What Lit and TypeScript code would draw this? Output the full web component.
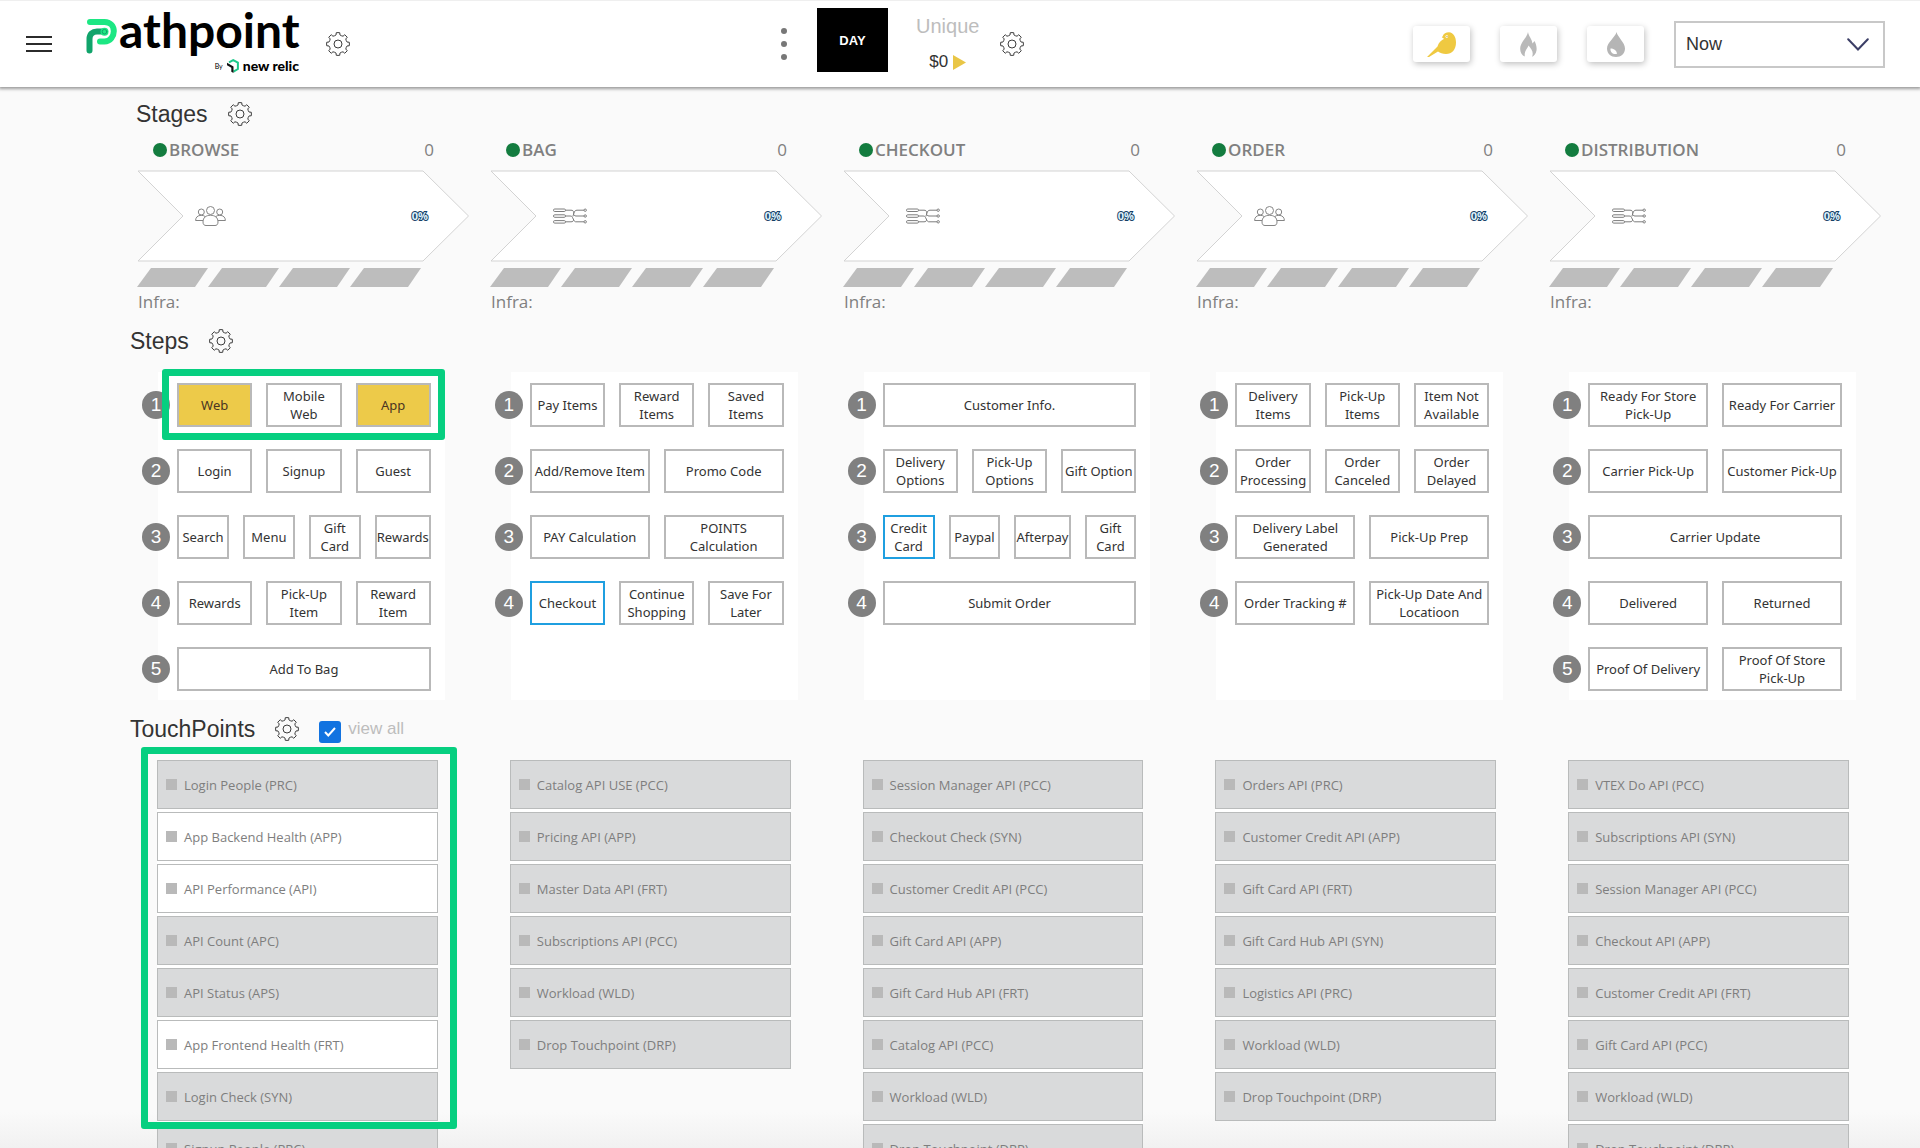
import { LitElement, html, css } from "lit";
import { customElement, property, state } from "lit/decorators.js";
import { classMap } from "lit/directives/class-map.js";

type Mark = "warn" | "active" | "";
interface Step { label: string; mark?: Mark }
interface TouchPoint { label: string; on?: boolean }
interface Stage {
  title: string;
  icon: "people" | "flow";
  steps: Step[][];
  touchpoints: TouchPoint[];
  highlight?: boolean;
}

const row = (...labels: string[]): Step[] =>
  labels.map((l) =>
    l.startsWith("!") ? { label: l.slice(1), mark: "warn" as Mark }
    : l.startsWith("*") ? { label: l.slice(1), mark: "active" as Mark }
    : { label: l });
const points = (...labels: string[]): TouchPoint[] =>
  labels.map((l) => (l.startsWith("+") ? { label: l.slice(1), on: true } : { label: l }));

const STAGES: Stage[] = [
  {
    title: "BROWSE", icon: "people", highlight: true,
    steps: [
      row("!Web", "Mobile\nWeb", "!App"),
      row("Login", "Signup", "Guest"),
      row("Search", "Menu", "Gift\nCard", "Rewards"),
      row("Rewards", "Pick-Up\nItem", "Reward\nItem"),
      row("Add To Bag"),
    ],
    touchpoints: points("Login People (PRC)", "+App Backend Health (APP)", "+API Performance (API)",
      "API Count (APC)", "API Status (APS)", "+App Frontend Health (FRT)", "Login Check (SYN)", "Signup People (PRC)"),
  },
  {
    title: "BAG", icon: "flow",
    steps: [
      row("Pay Items", "Reward\nItems", "Saved\nItems"),
      row("Add/Remove Item", "Promo Code"),
      row("PAY Calculation", "POINTS\nCalculation"),
      row("*Checkout", "Continue\nShopping", "Save For\nLater"),
    ],
    touchpoints: points("Catalog API USE (PCC)", "Pricing API (APP)", "Master Data API (FRT)",
      "Subscriptions API (PCC)", "Workload (WLD)", "Drop Touchpoint (DRP)"),
  },
  {
    title: "CHECKOUT", icon: "flow",
    steps: [
      row("Customer Info."),
      row("Delivery\nOptions", "Pick-Up\nOptions", "Gift Option"),
      row("*Credit\nCard", "Paypal", "Afterpay", "Gift\nCard"),
      row("Submit Order"),
    ],
    touchpoints: points("Session Manager API (PCC)", "Checkout Check (SYN)", "Customer Credit API (PCC)",
      "Gift Card API (APP)", "Gift Card Hub API (FRT)", "Catalog API (PCC)", "Workload (WLD)", "Drop Touchpoint (DRP)"),
  },
  {
    title: "ORDER", icon: "people",
    steps: [
      row("Delivery\nItems", "Pick-Up\nItems", "Item Not\nAvailable"),
      row("Order\nProcessing", "Order\nCanceled", "Order\nDelayed"),
      row("Delivery Label\nGenerated", "Pick-Up Prep"),
      row("Order Tracking #", "Pick-Up Date And\nLocatioon"),
    ],
    touchpoints: points("Orders API (PRC)", "Customer Credit API (APP)", "Gift Card API (FRT)",
      "Gift Card Hub API (SYN)", "Logistics API (PRC)", "Workload (WLD)", "Drop Touchpoint (DRP)"),
  },
  {
    title: "DISTRIBUTION", icon: "flow",
    steps: [
      row("Ready For Store\nPick-Up", "Ready For Carrier"),
      row("Carrier Pick-Up", "Customer Pick-Up"),
      row("Carrier Update"),
      row("Delivered", "Returned"),
      row("Proof Of Delivery", "Proof Of Store\nPick-Up"),
    ],
    touchpoints: points("VTEX Do API (PCC)", "Subscriptions API (SYN)", "Session Manager API (PCC)",
      "Checkout API (APP)", "Customer Credit API (FRT)", "Gift Card API (PCC)", "Workload (WLD)", "Drop Touchpoint (DRP)"),
  },
];

/* Eight-toothed cog outline on a 24 unit canvas. */
const gearPath = (() => {
  const at = (r: number, deg: number) => {
    const a = (deg * Math.PI) / 180;
    return `${(12 + r * Math.sin(a)).toFixed(2)} ${(12 - r * Math.cos(a)).toFixed(2)}`;
  };
  let d = "";
  for (let i = 0; i < 8; i++) {
    const c = i * 45;
    d += `${i ? "L" : "M"}${at(9.3, c - 12)}L${at(11.4, c - 9)}A11.4 11.4 0 0 1 ${at(11.4, c + 9)}L${at(9.3, c + 12)}`;
    d += `Q${at(8.7, c + 22)} ${at(9.3, c + 33)}`;
  }
  return d + "Z";
})();

const gearIcon = html`<svg viewBox="0 0 24 24" width="24" height="24" fill="none" stroke="#3c3c3c" stroke-width="1" stroke-linejoin="round" aria-hidden="true">
  <path d=${gearPath}></path><circle cx="12" cy="12" r="4"></circle></svg>`;

const peopleIcon = html`<svg viewBox="0 0 31 20" width="31" height="20" fill="none" stroke="#858585" stroke-width="1" aria-hidden="true">
  <circle cx="15.5" cy="4.5" r="4"></circle>
  <path d="M8 16C8 11.500 11 9.300 15.500 9.300S23 11.500 23 16C23 18.800 21.500 19.500 20 19.500H11C9.500 19.500 8 18.800 8 16Z"></path>
  <circle cx="6.300" cy="6" r="3"></circle><circle cx="24.700" cy="6" r="3"></circle>
  <path d="M8.300 14.500H.6C.6 11.500 2.500 9.300 6.300 9.300 8 9.300 9.300 9.800 10.200 10.600M22.700 14.500H30.400C30.400 11.500 28.500 9.300 24.700 9.300 23 9.300 21.700 9.800 20.800 10.600"></path></svg>`;

const flowIcon = html`<svg viewBox="0 0 34 16" width="34" height="16" fill="none" stroke="#7c7c7c" stroke-width="1" aria-hidden="true">
  <rect x=".5" y="1" width="12" height="2.500" rx="1.200"></rect>
  <rect x=".5" y="6.800" width="12" height="2.500" rx="1.200"></rect>
  <rect x=".5" y="12.600" width="12" height="2.500" rx="1.200"></rect>
  <path d="M12.500 2.200H18C20 2.200 20.500 3 20.500 4.500V5.500C20.500 7 21.500 8 23 8H31M12.500 8H17C18.500 8 19 8.500 19.500 9.500L21 12.500C21.500 13.500 22 13.800 23 13.800H31M12.500 13.800H18C20 13.800 20.500 13 20.500 11.500M31 2.200H24C22 2.200 21.500 3.500 21 5L19.800 8.500"></path>
  <circle cx="32.200" cy="2.200" r="1.200"></circle><circle cx="32.200" cy="8" r="1.200"></circle><circle cx="32.200" cy="13.800" r="1.200"></circle></svg>`;

@customElement("gear-button")
class GearButton extends LitElement {
  @property() label = "";
  static styles = css`
    :host { display: block; height: 24px; }
    .gear { display: block; width: 24px; height: 24px; padding: 0; border: 0; background: none; cursor: pointer; }
    svg { display: block; }
  `;
  render() {
    return html`<button class="gear" type="button" aria-label=${this.label}>${gearIcon}</button>`;
  }
}

@customElement("top-bar")
class TopBar extends LitElement {
  static styles = css`
    :host {
      display: flex; box-sizing: border-box; height: 87px; padding: 0 35px 0 26px; align-items: center;
      background: #fff; border-top: 1px solid #efefef; box-shadow: 0 1px 3px 1px rgba(0, 0, 0, .38);
      font-family: "Liberation Sans", Arial, sans-serif; position: relative; z-index: 1;
    }
    button { font: inherit; padding: 0; border: 0; background: none; cursor: pointer; }
    svg { display: block; }
    .left { flex: 755 1 0; display: flex; align-items: center; }
    .rest { flex: 1104 1 0; display: flex; align-items: center; justify-content: space-between; }
    .menu { display: grid; gap: 5px; width: 26px; }
    .menu span { height: 2px; background: #2b2b2b; }
    .brand { margin: 0 27px 8px 34px; width: 213px; color: #000; font-family: Lato, "Open Sans", sans-serif; text-decoration: none; }
    .name { display: flex; align-items: flex-start; height: 52px; font-size: 48px; line-height: 48px; font-weight: 700; gap: 1px; }
    .name svg { margin-top: 12px; flex: none; }
    .by { display: flex; justify-content: flex-end; align-items: center; height: 17px; font-size: 14px; line-height: 16px; font-weight: 900; gap: 4px; }
    .by small { font-size: 7px; font-weight: 400; }
    .middle { display: flex; align-items: center; }
    .dots { display: grid; gap: 7px; }
    .dots span { width: 6px; height: 6px; border-radius: 50%; background: #777; }
    .day { margin: 0 0 8px 30px; width: 71px; height: 64px; background: #000; color: #fff; font-size: 13px; font-weight: 700; }
    .unique { margin: 0 21px 0 28px; display: grid; justify-items: center; gap: 14px; }
    .unique .cap { font-size: 20px; line-height: 22px; color: #bdbdbd; }
    .money { display: flex; align-items: center; gap: 5px; font-size: 17px; line-height: 22px; color: #333; }
    .right { display: flex; align-items: center; gap: 30px; }
    .card { display: grid; place-items: center; width: 57px; height: 36px; border-radius: 3px; background: #fff; box-shadow: 1px 2px 6px rgba(0, 0, 0, .25); }
    .pick { display: grid; align-items: center; }
    select {
      appearance: none; grid-area: 1 / 1; width: 211px; height: 47px; padding: 0 10px; font: 18px "Liberation Sans", Arial, sans-serif;
      color: #333; background: #fff; border: 2px solid #c8c8c8; border-radius: 0;
    }
    .pick svg { grid-area: 1 / 1; justify-self: end; margin-right: 16px; pointer-events: none; }
  `;
  render() {
    return html`
      <div class="left">
        <button class="menu" type="button" aria-label="Menu"><span></span><span></span><span></span></button>
        <a class="brand" href="#">
          <span class="name">
            <svg width="32" height="36" viewBox="0 0 32 36" fill="none" stroke-linecap="round" stroke-linejoin="round" aria-hidden="true">
              <path d="M4 4H18.500C24.500 4 27.800 8.500 27.800 13.300S24.500 23.500 18.500 23.500H14" stroke="#1ce783" stroke-width="6"></path>
              <path d="M3.500 32.500V21C3.500 16 6.500 13.500 11 13.500H18" stroke="#11a46b" stroke-width="6"></path>
              <circle cx="18.500" cy="13.700" r="4" fill="#1ce783"></circle><circle cx="18.500" cy="13.700" r="2.300" fill="#1ce783" stroke="#11a46b"></circle>
            </svg>athpoint
          </span>
          <span class="by"><small>By</small>
            <svg width="12" height="14" viewBox="0 0 12 14" fill="none" aria-hidden="true">
              <path d="M2 3.300L6.200 1.100 10.900 3.700V10L6.500 12.600" stroke="#1dc98a" stroke-width="2"></path>
              <path d="M0 3.800L6.500 7.400V14L4.300 12.700V8.700L0 6.200Z" fill="#111"></path>
            </svg>new relic</span>
        </a>
        <gear-button label="General settings"></gear-button>
      </div>
      <div class="rest">
        <div class="middle">
          <button class="dots" type="button" aria-label="More"><span></span><span></span><span></span></button>
          <button class="day" type="button">DAY</button>
          <div class="unique">
            <span class="cap">Unique</span>
            <span class="money">$0<svg width="13" height="15" viewBox="0 0 13 15" aria-hidden="true"><path d="M0 0L13 7.500 0 15Z" fill="#e9c646"></path></svg></span>
          </div>
          <gear-button label="Value settings"></gear-button>
        </div>
        <div class="right">
          <button class="card" type="button" aria-label="Canary">
            <svg width="29" height="25" viewBox="0 0 29 25" aria-hidden="true">
              <path d="M15.500 4.500C16.500 1.500 19 .3 22 .3 26.500 .8 29 5 29 10.500 29 17.500 25 22 19 22 15.500 22 13 21 11 19.500L2 25H0L10.500 14.500C12 10 14.500 8.500 17 6.800L14.800 5.300Z" fill="#efc941"></path>
              <circle cx="19.800" cy="4.600" r="1.300" fill="#fff"></circle><circle cx="20" cy="4.600" r=".6" fill="#a58620"></circle>
            </svg>
          </button>
          <button class="card" type="button" aria-label="Flame">
            <svg width="17" height="25" viewBox="0 0 17 25" aria-hidden="true">
              <path d="M8 0C8.500 4 12 7 12.500 11.500L14.500 9C16 12 17 15 16.500 18.500 16 21.500 14 24 12 24.800 14 20.500 11.500 17 8.500 13.500 8 16 4 18.500 4.800 24.500 2 23.500 0 20.500 .2 16.500 .5 10 7 6 8 0Z" fill="#b9b9b9"></path>
            </svg>
          </button>
          <button class="card" type="button" aria-label="Drop">
            <svg width="18" height="25" viewBox="0 0 18 25" aria-hidden="true">
              <path d="M9.500 0C10.500 5 18 10.500 18 16.500 18 21.500 14 25 9 25S0 21.500 0 16.500C0 10.500 8.500 5 9.500 0Z" fill="#b5b5b5"></path>
              <path d="M3.500 16.500C6.500 16.500 9.500 18 10 21.800 6.500 23 3 20.500 3.500 16.500Z" fill="#fff"></path>
            </svg>
          </button>
          <div class="pick">
            <select aria-label="Time range"><option>Now</option></select>
            <svg width="22" height="13" viewBox="0 0 22 13" fill="none" stroke="#3b3e66" stroke-width="2" stroke-linecap="round" aria-hidden="true"><path d="M1.200 1.200L11 11.500 20.800 1.200"></path></svg>
          </div>
        </div>
      </div>`;
  }
}

@customElement("stage-card")
class StageCard extends LitElement {
  @property({ attribute: false }) stage!: Stage;
  static styles = css`
    :host { display: block; font-family: "Open Sans", "Noto Sans", sans-serif; color: #808080; }
    .title { display: flex; align-items: center; height: 24px; margin: 0 56px 8px 16px; font-size: 17px; line-height: 24px; }
    h3 { margin: 0 auto 0 2px; font-size: inherit; font-weight: 600; }
    .dot { width: 14px; height: 14px; border-radius: 50%; background: #137c3f; }
    .arrow { display: grid; height: 92px; margin-right: 21px; }
    .shape { grid-area: 1 / 1; display: block; width: 100%; height: 92px; }
    .inside { grid-area: 1 / 1; display: flex; align-items: center; justify-content: space-between; padding: 0 41px 0 58px; }
    .inside svg { display: block; }
    .flow { padding-left: 63px; }
    .pct { font: 700 11px/16px "Open Sans", sans-serif; color: #dff1fb; -webkit-text-stroke: 2px #154066; paint-order: stroke fill; }
    .bars { display: grid; grid-template-columns: repeat(4, 1fr); margin: 6px 69px 3px 0; }
    .bar { height: 19px; background: #bdbdbd; clip-path: polygon(14px 0, 100% 0, calc(100% - 13px) 100%, 0 100%); }
    .infra { margin: 0 0 0 1px; font-size: 17px; line-height: 24px; }
  `;
  render() {
    const s = this.stage;
    return html`
      <div class="title"><span class="dot"></span><h3>${s.title}</h3><span>0</span></div>
      <div class="arrow">
        <svg class="shape" viewBox="0 0 332 92" preserveAspectRatio="none" aria-hidden="true">
          <path d="M1 1H286L331.500 46 286 91H1L46 46Z" fill="#fff" stroke="#d3d3d3"></path>
        </svg>
        <div class=${classMap({ inside: true, flow: s.icon === "flow" })}>
          ${s.icon === "people" ? peopleIcon : flowIcon}<span class="pct">0%</span>
        </div>
      </div>
      <div class="bars">${[0, 1, 2, 3].map(() => html`<span class="bar"></span>`)}</div>
      <p class="infra">Infra:</p>`;
  }
}

@customElement("step-panel")
class StepPanel extends LitElement {
  @property({ attribute: false }) stage!: Stage;
  static styles = css`
    :host { display: block; box-sizing: border-box; position: relative; margin: 0 46px 0 20px; padding: 11px 14px 9px 0; background: #fff; }
    .steps { display: grid; gap: 22px; margin: 0 0 0 -16px; padding: 0; list-style: none; }
    .step { display: flex; align-items: center; gap: 7px; }
    .num { flex: none; width: 28px; height: 28px; border-radius: 50%; background: #808080; color: #fff; text-align: center; font: 19px/28px "Liberation Sans", Arial, sans-serif; }
    .boxes { flex: 1; display: flex; gap: 14px; }
    .box {
      flex: 1 1 0; height: 44px; padding: 0; border: 2px solid #b9b9b9; background: #fff; color: #333;
      font: 13px/18px "Noto Sans", "Open Sans", sans-serif; white-space: pre; text-align: center; cursor: pointer;
    }
    .warn { background: #edca49; color: #4a3522; }
    .active { border-color: #1f9fe0; }
    .ring { position: absolute; inset: -3px 0 auto 4px; height: 71px; box-sizing: border-box; border: 7px solid #06cf80; border-radius: 3px; pointer-events: none; }
  `;
  render() {
    return html`
      <ol class="steps">
        ${this.stage.steps.map((r, i) => html`
          <li class="step"><span class="num">${i + 1}</span>
            <div class="boxes">${r.map((b) => html`
              <button type="button" class=${classMap({ box: true, warn: b.mark === "warn", active: b.mark === "active" })}>${b.label}</button>`)}
            </div></li>`)}
      </ol>
      ${this.stage.highlight ? html`<div class="ring"></div>` : ""}`;
  }
}

@customElement("touchpoint-list")
class TouchpointList extends LitElement {
  @property({ attribute: false }) stage!: Stage;
  static styles = css`
    :host { display: block; position: relative; margin: 0 53px 0 19px; }
    .list { display: grid; gap: 3px; margin: 0; padding: 0; list-style: none; background: #fff; }
    .item {
      display: flex; align-items: center; gap: 7px; box-sizing: border-box; height: 49px; padding: 0 8px;
      border: 1px solid #b9bbbb; background: #d9dadb; color: #7e7e7e; font: 13px/18px "Open Sans", "Noto Sans", sans-serif;
    }
    .on { background: #fff; }
    .mark { width: 11px; height: 11px; background: #b9b9b9; }
    .ring { position: absolute; inset: -13px -19px auto -16px; height: 382px; box-sizing: border-box; border: 7px solid #06cf80; border-radius: 3px; pointer-events: none; }
  `;
  render() {
    return html`
      <ul class="list">
        ${this.stage.touchpoints.map((t) => html`
          <li class=${classMap({ item: true, on: !!t.on })}><span class="mark"></span><span>${t.label}</span></li>`)}
      </ul>
      ${this.stage.highlight ? html`<div class="ring"></div>` : ""}`;
  }
}

@customElement("app-root")
class AppRoot extends LitElement {
  @state() private all = true;
  static styles = css`
    :host {
      display: flex; flex-direction: column; height: 100vh; overflow: hidden;
      background: linear-gradient(to top, #f1f1f1, #fafafa 36px); font-family: "Liberation Sans", Arial, sans-serif;
    }
    top-bar { flex: none; }
    .board { flex: 1; min-height: 0; overflow: auto; scrollbar-width: none; padding: 15px 18px 0 130px; }
    .head { display: flex; align-items: center; height: 24px; color: #333; }
    .head h2 { margin: 0 20px 0 0; font-size: 23px; line-height: 24px; font-weight: 400; }
    .stages-head { padding-left: 6px; }
    .cols { display: grid; grid-template-columns: repeat(5, minmax(0, 1fr)); padding-left: 8px; }
    .stages { margin: 12px 0 15px; padding-left: 7px; }
    .steps { margin: 19px 0 17px; }
    .touch { margin: 19px 0 0; }
    .all { display: flex; align-items: center; gap: 7px; margin-left: 20px; font-size: 17px; line-height: 24px; color: #bdbdbd; }
    .all input { appearance: none; width: 22px; height: 22px; margin: 0; border-radius: 3px; background: #fff; border: 1px solid #888; }
    .all input:checked { border: 0; background: #1273e0; }
    .tick { display: grid; margin-top: 6px; }
    .tick > * { grid-area: 1 / 1; }
    .tick svg { place-self: center; pointer-events: none; }
  `;
  render() {
    return html`
      <top-bar></top-bar>
      <main class="board">
        <div class="head stages-head"><h2>Stages</h2><gear-button label="Stages settings"></gear-button></div>
        <div class="cols stages">${STAGES.map((s) => html`<stage-card .stage=${s}></stage-card>`)}</div>
        <div class="head"><h2>Steps</h2><gear-button label="Steps settings"></gear-button></div>
        <div class="cols steps">${STAGES.map((s) => html`<step-panel .stage=${s}></step-panel>`)}</div>
        <div class="head"><h2>TouchPoints</h2><gear-button label="TouchPoints settings"></gear-button>
          <label class="all"><span class="tick"><input type="checkbox" .checked=${this.all} @change=${() => (this.all = !this.all)}>
            ${this.all ? html`<svg width="12" height="10" viewBox="0 0 12 10" fill="none" stroke="#fff" stroke-width="2" aria-hidden="true"><path d="M1 5L4.300 8.500 11 1"></path></svg>` : ""}
          </span>view all</label>
        </div>
        <div class="cols touch">${STAGES.map((s) => html`<touchpoint-list .stage=${s}></touchpoint-list>`)}</div>
      </main>`;
  }
}
